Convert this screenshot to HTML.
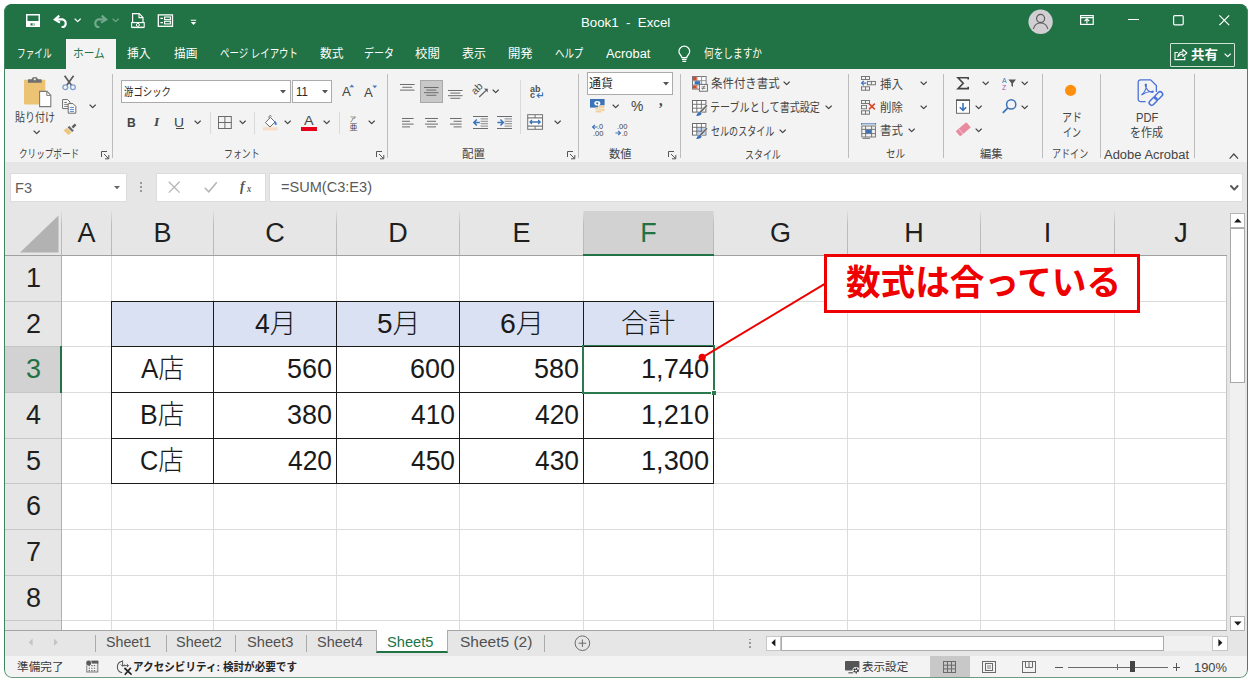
<!DOCTYPE html>
<html lang="ja"><head><meta charset="utf-8"><title>Book1 - Excel</title><style>
html,body{margin:0;padding:0;background:#fff;}
body{width:1252px;height:682px;overflow:hidden;position:relative;}
#win{position:absolute;left:4px;top:4px;width:1244px;height:674px;border-radius:8px 8px 8px 8px;overflow:hidden;background:#f3f3f3;}
#o{position:absolute;left:-4px;top:-4px;width:1252px;height:682px;}
#o div,#o svg,#o span{position:absolute;box-sizing:border-box;}
#o span{line-height:1;white-space:pre;transform-origin:0 0;font-family:'Liberation Sans','Noto Sans CJK JP',sans-serif;font-weight:400;}
#o svg{overflow:visible;}
</style></head><body><div id="win"><div id="o">
<div style="left:4px;top:4px;width:1244px;height:65px;background:#217346"></div>
<div style="left:66px;top:39px;width:50px;height:31px;background:#f3f3f3"></div>
<svg style="left:26px;top:14px;" width="14" height="13" viewBox="0 0 14 13"><rect x="0.75" y="0.75" width="12.5" height="11.5" fill="none" stroke="#ffffff" stroke-width="1.5"/><rect x="1" y="7" width="12" height="5" fill="#ffffff"/><rect x="4.5" y="9.3" width="4" height="2.2" fill="#217346"/><rect x="6.6" y="9.3" width="1.2" height="2.2" fill="#ffffff"/></svg>
<svg style="left:53px;top:14px;" width="17" height="14" viewBox="0 0 17 14"><path d="M6.3 1.6 L1.8 5.6 L7 8.6" fill="none" stroke="#ffffff" stroke-width="2.1" stroke-linejoin="miter"/><path d="M2.5 5.4 H10 A4.2 4.2 0 0 1 10.6 13 H8.6" fill="none" stroke="#ffffff" stroke-width="2.1"/></svg>
<svg style="left:74.3px;top:17.65px;" width="7.4" height="4.7" viewBox="0 0 7.4 4.7"><path d="M1 1 L3.7 3.7 L6.4 1" fill="none" stroke="#ffffff" stroke-width="1.15" stroke-linecap="round" stroke-linejoin="round" opacity="1"/></svg>
<svg style="left:91px;top:14px;" width="17" height="14" viewBox="0 0 17 14"><g opacity="0.38"><path d="M10.7 1.6 L15.2 5.6 L10 8.6" fill="none" stroke="#ffffff" stroke-width="2.1"/><path d="M14.5 5.4 H7 A4.2 4.2 0 0 0 6.4 13 H8.4" fill="none" stroke="#ffffff" stroke-width="2.1"/></g></svg>
<svg style="left:112.3px;top:17.65px;" width="7.4" height="4.7" viewBox="0 0 7.4 4.7"><path d="M1 1 L3.7 3.7 L6.4 1" fill="none" stroke="#ffffff" stroke-width="1.15" stroke-linecap="round" stroke-linejoin="round" opacity="0.38"/></svg>
<svg style="left:131px;top:13px;" width="14" height="15" viewBox="0 0 14 15"><path d="M1.6 11 V0.6 H8.2 L12 4.4 V11" fill="none" stroke="#ffffff" stroke-width="1.2"/><path d="M8 0.8 V4.6 H12" fill="none" stroke="#ffffff" stroke-width="1.1"/><rect x="0.6" y="9.6" width="12.6" height="4.6" fill="#217346" stroke="#ffffff" stroke-width="1.1"/><circle cx="6.9" cy="11.9" r="1.5" fill="none" stroke="#ffffff" stroke-width="1"/><path d="M1 14.6 H13" stroke="#ffffff" stroke-width="1"/></svg>
<svg style="left:157px;top:14px;" width="17" height="13" viewBox="0 0 17 13"><rect x="1.3" y="0.9" width="14.2" height="11.4" fill="none" stroke="#ffffff" stroke-width="1.3"/><path d="M3.4 4.3 H6 M3.4 8.6 H6" stroke="#ffffff" stroke-width="1.2"/><rect x="7.6" y="3" width="5.8" height="2.6" fill="none" stroke="#ffffff" stroke-width="1.1"/><rect x="7.6" y="7.3" width="5.8" height="2.6" fill="none" stroke="#ffffff" stroke-width="1.1"/></svg>
<svg style="left:190px;top:19px;" width="7" height="7" viewBox="0 0 7 7"><path d="M0.8 1.2 H6.2" stroke="#ffffff" stroke-width="1.1"/><path d="M0.8 3 H6.2 L3.5 6 Z" fill="#ffffff"/></svg>
<svg style="left:1028px;top:9px;" width="26" height="26" viewBox="0 0 26 26"><circle cx="12.6" cy="12.8" r="12.2" fill="#d2cfd2"/><circle cx="12.6" cy="9.4" r="4" fill="none" stroke="#5a5a5a" stroke-width="1.2"/><path d="M5.4 20 A7.3 7.3 0 0 1 19.8 20" fill="none" stroke="#5a5a5a" stroke-width="1.2"/></svg>
<svg style="left:1080px;top:15px;" width="14" height="10" viewBox="0 0 14 10"><rect x="0.6" y="0.6" width="12.6" height="8.8" fill="none" stroke="#ffffff" stroke-width="1.2"/><path d="M0.6 2.6 H13.2" stroke="#ffffff" stroke-width="1.1"/><path d="M6.9 8.4 V4 M4.5 6.2 L6.9 3.8 L9.3 6.2" fill="none" stroke="#ffffff" stroke-width="1.2"/></svg>
<div style="left:1128px;top:18.5px;width:10.5px;height:1.2px;background:#ffffff"></div>
<svg style="left:1173px;top:15px;" width="11" height="11" viewBox="0 0 11 11"><rect x="0.6" y="0.6" width="9.6" height="9.3" rx="1.2" fill="none" stroke="#ffffff" stroke-width="1.2"/></svg>
<svg style="left:1219px;top:15px;" width="11" height="11" viewBox="0 0 11 11"><path d="M0.4 0.4 L10.2 10.2 M10.2 0.4 L0.4 10.2" stroke="#ffffff" stroke-width="1.2"/></svg>
<svg style="left:677px;top:46px;" width="15" height="18" viewBox="0 0 15 18"><path d="M4.9 11.6 C4.9 9.6 1.9 8.6 1.9 5.6 A5.4 5.4 0 0 1 12.7 5.6 C12.7 8.6 9.7 9.6 9.7 11.6 Z" fill="none" stroke="#ffffff" stroke-width="1.2"/><path d="M5 13.4 H9.6 M5.4 15.3 H9.2" stroke="#ffffff" stroke-width="1.2"/></svg>
<div style="left:1170px;top:43px;width:65px;height:23.5px;border:1px solid #cfe3d7;border-radius:1px"></div>
<svg style="left:1174px;top:47px;" width="14" height="14" viewBox="0 0 14 14"><path d="M4 5.5 H1 V12.6 H10.8 V9.8" fill="none" stroke="#ffffff" stroke-width="1.1"/><path d="M3.8 9.8 C4.3 6.6 6.4 5 8.9 4.8 V2.4 L12.9 6 L8.9 9.4 V7 C6.8 7 5.2 7.8 3.8 9.8 Z" fill="none" stroke="#ffffff" stroke-width="1.1" stroke-linejoin="round"/></svg>
<svg style="left:1224.3px;top:52.65px;" width="7.4" height="4.7" viewBox="0 0 7.4 4.7"><path d="M1 1 L3.7 3.7 L6.4 1" fill="none" stroke="#ffffff" stroke-width="1.15" stroke-linecap="round" stroke-linejoin="round" opacity="1"/></svg>
<div style="left:4px;top:69px;width:1244px;height:93px;background:#f3f3f3"></div>
<svg style="left:24px;top:76px;" width="28" height="32" viewBox="0 0 28 32"><rect x="0" y="3.8" width="21.3" height="24.6" rx="0.8" fill="#ebc373"/><path d="M3.9 6.8 V4 Q3.9 3.2 4.7 3.2 H7.6 Q8 1 10.8 1 Q13.6 1 14 3.2 H16.9 Q17.7 3.2 17.7 4 V6.8 Z" fill="#707070"/><circle cx="10.8" cy="3.3" r="1.1" fill="#f3f3f3"/><path d="M15.6 15.4 H23 L26.8 19.2 V30.6 H15.6 Z" fill="#fff" stroke="#7a7a7a" stroke-width="1.1"/><path d="M22.8 15.6 V19.4 H26.6" fill="none" stroke="#7a7a7a" stroke-width="1"/></svg>
<svg style="left:33.3px;top:129.85px;" width="7.4" height="4.7" viewBox="0 0 7.4 4.7"><path d="M1 1 L3.7 3.7 L6.4 1" fill="none" stroke="#444" stroke-width="1.15" stroke-linecap="round" stroke-linejoin="round" opacity="1"/></svg>
<svg style="left:62px;top:75px;" width="15" height="16" viewBox="0 0 15 16"><path d="M2.6 0.8 L9.6 10.4 M11.6 0.8 L4.6 10.4" stroke="#5a5a5a" stroke-width="1.7" fill="none"/><circle cx="3.3" cy="12.2" r="2.4" fill="none" stroke="#7d9dce" stroke-width="1.3"/><circle cx="10.9" cy="12.2" r="2.4" fill="none" stroke="#7d9dce" stroke-width="1.3"/></svg>
<svg style="left:62px;top:99px;" width="15" height="15" viewBox="0 0 15 15"><path d="M0.6 0.6 H5.6 L8 3 V9.6 H0.6 Z" fill="#fff" stroke="#6b6b6b" stroke-width="1"/><path d="M2.2 3.4 H5 M2.2 5.4 H6.4 M2.2 7.4 H6.4" stroke="#6b6b6b" stroke-width="0.9"/><path d="M6.2 4.6 H11 L13.8 7.4 V14.2 H6.2 Z" fill="#fff" stroke="#6b6b6b" stroke-width="1"/><path d="M7.8 8.4 H12 M7.8 10.4 H12 M7.8 12.4 H12" stroke="#4a78c0" stroke-width="0.9"/></svg>
<svg style="left:88.7px;top:104.25px;" width="7.4" height="4.7" viewBox="0 0 7.4 4.7"><path d="M1 1 L3.7 3.7 L6.4 1" fill="none" stroke="#444" stroke-width="1.15" stroke-linecap="round" stroke-linejoin="round" opacity="1"/></svg>
<svg style="left:63px;top:123px;" width="14" height="13" viewBox="0 0 14 13"><path d="M8.6 3.6 L11.8 0.6 L13.4 2.2 L10.2 5.4 Z" fill="#5f5f5f"/><path d="M6.2 2.8 L10.8 7.4 L9.2 9 L4.6 4.4 Z" fill="#6b6b6b"/><path d="M4 5 L8.6 9.6 L5.4 12 L0.4 7.2 Z" fill="#ecc67d"/></svg>
<svg style="left:101px;top:150.5px;" width="9" height="9" viewBox="0 0 9 9"><path d="M0.5 6 V0.5 H6" fill="none" stroke="#555" stroke-width="1"/><path d="M3 3 L7.5 7.5 M7.8 4 V7.8 H4" fill="none" stroke="#555" stroke-width="1"/></svg>
<div style="left:112px;top:74px;width:1px;height:84px;background:#bcbcbc"></div>
<div style="left:121px;top:80px;width:170px;height:23px;background:#fff;border:1px solid #ababab"></div>
<div style="left:292px;top:80px;width:40px;height:23px;background:#fff;border:1px solid #ababab"></div>
<svg style="left:280px;top:90px;" width="7" height="4" viewBox="0 0 7 4"><path d="M0 0 H6 L3 3.4 Z" fill="#555"/></svg>
<svg style="left:322px;top:90px;" width="7" height="4" viewBox="0 0 7 4"><path d="M0 0 H6 L3 3.4 Z" fill="#555"/></svg>
<svg style="left:349px;top:84px;" width="6" height="4" viewBox="0 0 6 4"><path d="M0.4 3.2 L2.8 0.6 L5.2 3.2 Z" fill="#4a78c0"/></svg>
<svg style="left:371.5px;top:84.5px;" width="6" height="4" viewBox="0 0 6 4"><path d="M0.4 0.6 L2.8 3.2 L5.2 0.6 Z" fill="#4a78c0"/></svg>
<div style="left:175.5px;top:127.6px;width:8.6px;height:1.1px;background:#444"></div>
<svg style="left:194.3px;top:120.45px;" width="7.4" height="4.7" viewBox="0 0 7.4 4.7"><path d="M1 1 L3.7 3.7 L6.4 1" fill="none" stroke="#444" stroke-width="1.15" stroke-linecap="round" stroke-linejoin="round" opacity="1"/></svg>
<div style="left:210px;top:112px;width:1px;height:22px;background:#dadada"></div>
<svg style="left:218px;top:116px;" width="14" height="13" viewBox="0 0 14 13"><rect x="0.5" y="0.5" width="12.8" height="12" fill="none" stroke="#6b6b6b" stroke-width="1"/><path d="M6.9 0.5 V12.5 M0.5 6.5 H13.3" stroke="#6b6b6b" stroke-width="1"/></svg>
<svg style="left:239.3px;top:120.45px;" width="7.4" height="4.7" viewBox="0 0 7.4 4.7"><path d="M1 1 L3.7 3.7 L6.4 1" fill="none" stroke="#444" stroke-width="1.15" stroke-linecap="round" stroke-linejoin="round" opacity="1"/></svg>
<div style="left:254px;top:112px;width:1px;height:22px;background:#dadada"></div>
<svg style="left:263px;top:114px;" width="15" height="17" viewBox="0 0 15 17"><path d="M2.4 8.6 L7.4 3.4 L12 8 L7 13 Z" fill="#fff" stroke="#6b6b6b" stroke-width="1"/><path d="M6.2 4.4 C5.4 1.6 7.6 0.6 8.4 2.6" fill="none" stroke="#6b6b6b" stroke-width="1"/><path d="M11.6 7 C13.6 8.6 13.8 10.6 12.8 11 C11.8 10.4 12 9 11.6 7 Z" fill="#3f7bd0" stroke="#3f7bd0" stroke-width="0.8"/><rect x="0" y="13.2" width="14.6" height="3.2" fill="#f8dcc6"/></svg>
<svg style="left:284.0px;top:120.45px;" width="7.4" height="4.7" viewBox="0 0 7.4 4.7"><path d="M1 1 L3.7 3.7 L6.4 1" fill="none" stroke="#444" stroke-width="1.15" stroke-linecap="round" stroke-linejoin="round" opacity="1"/></svg>
<div style="left:301px;top:126.6px;width:16px;height:4px;background:#e8001a"></div>
<svg style="left:322.9px;top:120.45px;" width="7.4" height="4.7" viewBox="0 0 7.4 4.7"><path d="M1 1 L3.7 3.7 L6.4 1" fill="none" stroke="#444" stroke-width="1.15" stroke-linecap="round" stroke-linejoin="round" opacity="1"/></svg>
<div style="left:339px;top:112px;width:1px;height:22px;background:#dadada"></div>
<svg style="left:368.0px;top:120.45px;" width="7.4" height="4.7" viewBox="0 0 7.4 4.7"><path d="M1 1 L3.7 3.7 L6.4 1" fill="none" stroke="#444" stroke-width="1.15" stroke-linecap="round" stroke-linejoin="round" opacity="1"/></svg>
<svg style="left:376px;top:150.5px;" width="9" height="9" viewBox="0 0 9 9"><path d="M0.5 6 V0.5 H6" fill="none" stroke="#555" stroke-width="1"/><path d="M3 3 L7.5 7.5 M7.8 4 V7.8 H4" fill="none" stroke="#555" stroke-width="1"/></svg>
<div style="left:387px;top:74px;width:1px;height:84px;background:#bcbcbc"></div>
<svg style="left:400px;top:83.6px;" width="14.6" height="9.399999999999999" viewBox="0 0 14.6 9.399999999999999"><path d="M0.0 0.5 H14.6" stroke="#6b6b6b" stroke-width="1"/><path d="M2.3 3.3 H12.3" stroke="#6b6b6b" stroke-width="1"/><path d="M0.0 6.1 H14.6" stroke="#6b6b6b" stroke-width="1"/></svg>
<div style="left:420px;top:80px;width:23px;height:23px;background:#c8c8c8;border:1px solid #a8a8a8"></div>
<svg style="left:424.4px;top:86.8px;" width="14.6" height="11.4" viewBox="0 0 14.6 11.4"><path d="M0.0 0.5 H14.6" stroke="#6b6b6b" stroke-width="1"/><path d="M2.3 3.1 H12.3" stroke="#6b6b6b" stroke-width="1"/><path d="M0.0 5.7 H14.6" stroke="#6b6b6b" stroke-width="1"/><path d="M2.3 8.3 H12.3" stroke="#6b6b6b" stroke-width="1"/></svg>
<svg style="left:448px;top:90px;" width="14.6" height="11.4" viewBox="0 0 14.6 11.4"><path d="M0.0 0.5 H14.6" stroke="#6b6b6b" stroke-width="1"/><path d="M2.3 3.1 H12.3" stroke="#6b6b6b" stroke-width="1"/><path d="M0.0 5.7 H14.6" stroke="#6b6b6b" stroke-width="1"/><path d="M2.3 8.3 H12.3" stroke="#6b6b6b" stroke-width="1"/></svg>
<svg style="left:472px;top:83px;" width="17" height="15" viewBox="0 0 17 15"><path d="M7.2 14 L15.2 6.4" stroke="#5f5f5f" stroke-width="1.2"/><path d="M12 5.6 L15.8 5.8 L15.6 9.6 Z" fill="#5f5f5f"/><text transform="translate(3.2 12.2) rotate(-45)" font-family="Liberation Sans,sans-serif" font-size="10.5" fill="#505050">ab</text></svg>
<svg style="left:492.3px;top:89.15px;" width="7.4" height="4.7" viewBox="0 0 7.4 4.7"><path d="M1 1 L3.7 3.7 L6.4 1" fill="none" stroke="#444" stroke-width="1.15" stroke-linecap="round" stroke-linejoin="round" opacity="1"/></svg>
<div style="left:519.5px;top:80px;width:1px;height:54px;background:#dadada"></div>
<svg style="left:401.5px;top:118px;" width="11.6" height="12.2" viewBox="0 0 11.6 12.2"><path d="M0 0.5 H11.6" stroke="#6b6b6b" stroke-width="1"/><path d="M0 3.3 H8" stroke="#6b6b6b" stroke-width="1"/><path d="M0 6.1 H11.6" stroke="#6b6b6b" stroke-width="1"/><path d="M0 8.899999999999999 H8" stroke="#6b6b6b" stroke-width="1"/></svg>
<svg style="left:424.7px;top:118px;" width="13" height="12.2" viewBox="0 0 13 12.2"><path d="M0.0 0.5 H13.0" stroke="#6b6b6b" stroke-width="1"/><path d="M2.0 3.3 H11.0" stroke="#6b6b6b" stroke-width="1"/><path d="M0.0 6.1 H13.0" stroke="#6b6b6b" stroke-width="1"/><path d="M2.0 8.899999999999999 H11.0" stroke="#6b6b6b" stroke-width="1"/></svg>
<svg style="left:449.7px;top:118px;" width="11.6" height="12.2" viewBox="0 0 11.6 12.2"><path d="M0.0 0.5 H11.6" stroke="#6b6b6b" stroke-width="1"/><path d="M3.5999999999999996 3.3 H11.6" stroke="#6b6b6b" stroke-width="1"/><path d="M0.0 6.1 H11.6" stroke="#6b6b6b" stroke-width="1"/><path d="M3.5999999999999996 8.899999999999999 H11.6" stroke="#6b6b6b" stroke-width="1"/></svg>
<svg style="left:472.8px;top:115.8px;" width="16" height="13" viewBox="0 0 16 13"><path d="M0 0.5 H15 M0 12.5 H15" stroke="#6b6b6b" stroke-width="1"/><path d="M7.6 2.9 H15 M7.6 5.3 H15 M7.6 7.7 H15 M7.6 10.1 H15" stroke="#8a8a8a" stroke-width="1"/><path d="M0.8 6.5 H6.8 M3.8 3.4 L0.8 6.5 L3.8 9.6" fill="none" stroke="#3b73b9" stroke-width="1.5"/></svg>
<svg style="left:497px;top:115.8px;" width="16" height="13" viewBox="0 0 16 13"><path d="M0 0.5 H15 M0 12.5 H15" stroke="#6b6b6b" stroke-width="1"/><path d="M7.6 2.9 H15 M7.6 5.3 H15 M7.6 7.7 H15 M7.6 10.1 H15" stroke="#8a8a8a" stroke-width="1"/><path d="M0.4 6.5 H6.4 M3.4 3.4 L6.4 6.5 L3.4 9.6" fill="none" stroke="#3b73b9" stroke-width="1.5"/></svg>
<svg style="left:535.5px;top:91.5px;" width="8" height="7" viewBox="0 0 8 7"><path d="M6.6 0.4 V3.6 H1.2 M3.4 1.4 L1.2 3.6 L3.4 5.8" fill="none" stroke="#3b73b9" stroke-width="1.1"/></svg>
<svg style="left:527px;top:114px;" width="16" height="16" viewBox="0 0 16 16"><rect x="0.7" y="0.7" width="14.8" height="14.6" fill="#fff" stroke="#7a7a7a" stroke-width="1.1"/><path d="M0.7 3.9 H15.5 M0.7 12.1 H15.5 M8.1 0.7 V3.9 M8.1 12.1 V15.3" stroke="#7a7a7a" stroke-width="1.1"/><path d="M3 8 H13.2 M5 6 L3 8 L5 10 M11.2 6 L13.2 8 L11.2 10" fill="none" stroke="#3b73b9" stroke-width="1.3"/></svg>
<svg style="left:554.3px;top:120.45px;" width="7.4" height="4.7" viewBox="0 0 7.4 4.7"><path d="M1 1 L3.7 3.7 L6.4 1" fill="none" stroke="#444" stroke-width="1.15" stroke-linecap="round" stroke-linejoin="round" opacity="1"/></svg>
<svg style="left:567px;top:150.5px;" width="9" height="9" viewBox="0 0 9 9"><path d="M0.5 6 V0.5 H6" fill="none" stroke="#555" stroke-width="1"/><path d="M3 3 L7.5 7.5 M7.8 4 V7.8 H4" fill="none" stroke="#555" stroke-width="1"/></svg>
<div style="left:578px;top:74px;width:1px;height:84px;background:#bcbcbc"></div>
<div style="left:587px;top:72px;width:86px;height:22.5px;background:#fff;border:1px solid #ababab"></div>
<svg style="left:662.5px;top:82px;" width="7" height="4" viewBox="0 0 7 4"><path d="M0 0 H6 L3 3.4 Z" fill="#555"/></svg>
<svg style="left:590px;top:99px;" width="16" height="16" viewBox="0 0 16 16"><rect x="0" y="0" width="14.6" height="8.6" fill="#3b73b9"/><ellipse cx="7.3" cy="4.3" rx="3" ry="2.3" fill="#fff"/><circle cx="7.3" cy="4.3" r="1.1" fill="#3b73b9"/><rect x="5.4" y="8.2" width="5" height="2.4" fill="#f0cf96"/><rect x="8.4" y="6.4" width="6.4" height="2.6" fill="#f0cf96" stroke="#f3f3f3" stroke-width="0.5"/><rect x="8.4" y="9.6" width="6.4" height="2.6" fill="#f0cf96" stroke="#f3f3f3" stroke-width="0.5"/><rect x="5.4" y="11.2" width="6.4" height="2.6" fill="#f0cf96" stroke="#f3f3f3" stroke-width="0.5"/></svg>
<svg style="left:612.3px;top:104.25px;" width="7.4" height="4.7" viewBox="0 0 7.4 4.7"><path d="M1 1 L3.7 3.7 L6.4 1" fill="none" stroke="#444" stroke-width="1.15" stroke-linecap="round" stroke-linejoin="round" opacity="1"/></svg>
<svg style="left:592px;top:123.6px;" width="6" height="6" viewBox="0 0 6 6"><path d="M0.6 3 H5.6 M2.8 0.8 L0.6 3 L2.8 5.2" fill="none" stroke="#3b73b9" stroke-width="1.2"/></svg>
<svg style="left:615.4px;top:130.2px;" width="6" height="6" viewBox="0 0 6 6"><path d="M0.4 3 H5.4 M3.2 0.8 L5.4 3 L3.2 5.2" fill="none" stroke="#3b73b9" stroke-width="1.2"/></svg>
<svg style="left:668px;top:150.5px;" width="9" height="9" viewBox="0 0 9 9"><path d="M0.5 6 V0.5 H6" fill="none" stroke="#555" stroke-width="1"/><path d="M3 3 L7.5 7.5 M7.8 4 V7.8 H4" fill="none" stroke="#555" stroke-width="1"/></svg>
<div style="left:679.6px;top:74px;width:1px;height:84px;background:#bcbcbc"></div>
<svg style="left:692px;top:76px;" width="16" height="16" viewBox="0 0 16 16"><rect x="0.5" y="0.5" width="13.6" height="12.6" fill="#fff" stroke="#7a7a7a" stroke-width="1"/><path d="M0.5 4.7 H14 M0.5 8.9 H14 M5 0.5 V13 M9.6 0.5 V13" stroke="#8a8a8a" stroke-width="0.9"/><rect x="1" y="1" width="3.6" height="3.3" fill="#d9482b"/><rect x="2.6" y="5.2" width="5.6" height="3.2" fill="#3b73b9"/><rect x="1" y="9.4" width="3.6" height="3.2" fill="#d9482b"/><rect x="7.4" y="8.4" width="8" height="6.8" fill="#fff" stroke="#6b6b6b" stroke-width="1"/><path d="M9.4 12.4 H13.4 M9.4 10.8 H13.4 M10.4 13.8 L12.6 9.6" stroke="#6b6b6b" stroke-width="0.8"/></svg>
<svg style="left:783.3px;top:81.45px;" width="7.4" height="4.7" viewBox="0 0 7.4 4.7"><path d="M1 1 L3.7 3.7 L6.4 1" fill="none" stroke="#444" stroke-width="1.15" stroke-linecap="round" stroke-linejoin="round" opacity="1"/></svg>
<svg style="left:692px;top:99.6px;" width="17" height="17" viewBox="0 0 17 17"><rect x="0.5" y="0.5" width="13.4" height="11.6" fill="#fff" stroke="#6b6b6b" stroke-width="1"/><path d="M0.5 4.3 H14 M0.5 8.2 H14 M4.8 0.5 V12 M9.4 0.5 V12" stroke="#6b6b6b" stroke-width="0.9"/><path d="M7.4 11.6 L14.2 4.4 L15.8 5.8 L9 13.2 Z" fill="#6b6b6b" stroke="#f3f3f3" stroke-width="0.6"/><path d="M4.2 16 C5.4 13 7 11.6 8.6 12.2 L9.6 13.6 C9.4 15.4 7 16.2 4.2 16 Z" fill="#3b73b9"/></svg>
<svg style="left:825.3px;top:105.25px;" width="7.4" height="4.7" viewBox="0 0 7.4 4.7"><path d="M1 1 L3.7 3.7 L6.4 1" fill="none" stroke="#444" stroke-width="1.15" stroke-linecap="round" stroke-linejoin="round" opacity="1"/></svg>
<svg style="left:692px;top:122.6px;" width="17" height="17" viewBox="0 0 17 17"><rect x="0.5" y="0.5" width="13.4" height="11.6" fill="#fff" stroke="#6b6b6b" stroke-width="1"/><rect x="4.6" y="4.4" width="8.6" height="7.6" fill="#bfd2ee"/><path d="M0.5 4.3 H14 M0.5 8.2 H14 M4.8 0.5 V12 M9.4 0.5 V12" stroke="#6b6b6b" stroke-width="0.9"/><path d="M7.4 11.6 L14.2 4.4 L15.8 5.8 L9 13.2 Z" fill="#6b6b6b" stroke="#f3f3f3" stroke-width="0.6"/><path d="M4.2 16 C5.4 13 7 11.6 8.6 12.2 L9.6 13.6 C9.4 15.4 7 16.2 4.2 16 Z" fill="#3b73b9"/></svg>
<svg style="left:778.7px;top:128.65px;" width="7.4" height="4.7" viewBox="0 0 7.4 4.7"><path d="M1 1 L3.7 3.7 L6.4 1" fill="none" stroke="#444" stroke-width="1.15" stroke-linecap="round" stroke-linejoin="round" opacity="1"/></svg>
<div style="left:848px;top:74px;width:1px;height:84px;background:#bcbcbc"></div>
<svg style="left:861px;top:76px;" width="15" height="15" viewBox="0 0 15 15"><g fill="none" stroke="#6b6b6b" stroke-width="0.9"><rect x="0.5" y="0.5" width="8" height="3"/><rect x="6.4" y="5.4" width="8" height="3.4"/><rect x="0.5" y="10.8" width="8" height="3.4"/><path d="M4.5 0.5 V3.5 M10.4 5.4 V8.8 M4.5 10.8 V14.2"/></g><path d="M0.6 7.1 H5.4 M2.8 4.9 L0.6 7.1 L2.8 9.3" fill="none" stroke="#3b73b9" stroke-width="1.2"/></svg>
<svg style="left:919.6px;top:81.45px;" width="7.4" height="4.7" viewBox="0 0 7.4 4.7"><path d="M1 1 L3.7 3.7 L6.4 1" fill="none" stroke="#444" stroke-width="1.15" stroke-linecap="round" stroke-linejoin="round" opacity="1"/></svg>
<svg style="left:861px;top:99.6px;" width="16" height="15" viewBox="0 0 16 15"><g fill="none" stroke="#6b6b6b" stroke-width="0.9"><rect x="0.5" y="0.5" width="8" height="3"/><rect x="0.5" y="5.4" width="5" height="3.4"/><rect x="0.5" y="10.8" width="8" height="3.4"/><path d="M4.5 0.5 V3.5 M4.5 10.8 V14.2"/></g><path d="M8 3.6 L13.8 9.4 M13.8 3.6 L8 9.4" stroke="#d9482b" stroke-width="1.5"/></svg>
<svg style="left:919.6px;top:104.95px;" width="7.4" height="4.7" viewBox="0 0 7.4 4.7"><path d="M1 1 L3.7 3.7 L6.4 1" fill="none" stroke="#444" stroke-width="1.15" stroke-linecap="round" stroke-linejoin="round" opacity="1"/></svg>
<svg style="left:861px;top:122.6px;" width="16" height="16" viewBox="0 0 16 16"><g fill="none" stroke="#6b6b6b" stroke-width="0.9"><rect x="0.8" y="3" width="13.6" height="11"/><path d="M0.8 6.4 H14.4 M0.8 10.6 H14.4 M4.6 3 V14 M10.6 3 V14"/></g><rect x="5" y="6.8" width="5.2" height="3.4" fill="#3b73b9"/><path d="M0.6 0.8 H14.6 M0.6 0 V1.8 M14.6 0 V1.8" stroke="#3b73b9" stroke-width="0.9"/><path d="M1.6 15.4 H9" stroke="#6b6b6b" stroke-width="0.9"/></svg>
<svg style="left:907.6px;top:128.45px;" width="7.4" height="4.7" viewBox="0 0 7.4 4.7"><path d="M1 1 L3.7 3.7 L6.4 1" fill="none" stroke="#444" stroke-width="1.15" stroke-linecap="round" stroke-linejoin="round" opacity="1"/></svg>
<div style="left:943px;top:74px;width:1px;height:84px;background:#bcbcbc"></div>
<svg style="left:956.8px;top:77px;" width="13" height="13" viewBox="0 0 13 13"><path d="M11.2 2.6 V0.8 H1 L6.2 6.2 L1 11.6 H11.2 V9.8" fill="none" stroke="#444" stroke-width="1.6" stroke-linejoin="miter"/></svg>
<svg style="left:981.9px;top:81.25px;" width="7.4" height="4.7" viewBox="0 0 7.4 4.7"><path d="M1 1 L3.7 3.7 L6.4 1" fill="none" stroke="#444" stroke-width="1.15" stroke-linecap="round" stroke-linejoin="round" opacity="1"/></svg>
<svg style="left:1008px;top:79px;" width="9" height="9" viewBox="0 0 9 9"><path d="M0.4 0.6 H8 L5 4.2 V8 L3.4 6.8 V4.2 Z" fill="#555"/></svg>
<svg style="left:1021.0px;top:81.25px;" width="7.4" height="4.7" viewBox="0 0 7.4 4.7"><path d="M1 1 L3.7 3.7 L6.4 1" fill="none" stroke="#444" stroke-width="1.15" stroke-linecap="round" stroke-linejoin="round" opacity="1"/></svg>
<svg style="left:956px;top:99px;" width="14" height="15" viewBox="0 0 14 15"><rect x="0.5" y="1.5" width="13" height="12.8" fill="#fff" stroke="#6b6b6b" stroke-width="1"/><path d="M0 1 H14" stroke="#555" stroke-width="1.6"/><path d="M7 4 V11.4 M3.8 8.2 L7 11.4 L10.2 8.2" fill="none" stroke="#3b73b9" stroke-width="1.6"/></svg>
<svg style="left:974.7px;top:104.55px;" width="7.4" height="4.7" viewBox="0 0 7.4 4.7"><path d="M1 1 L3.7 3.7 L6.4 1" fill="none" stroke="#444" stroke-width="1.15" stroke-linecap="round" stroke-linejoin="round" opacity="1"/></svg>
<svg style="left:1002px;top:99px;" width="15" height="15" viewBox="0 0 15 15"><circle cx="9.2" cy="5.4" r="4.6" fill="none" stroke="#3b73b9" stroke-width="1.5"/><path d="M5.8 8.8 L0.8 13.8" stroke="#3b73b9" stroke-width="1.8"/></svg>
<svg style="left:1021.0px;top:104.55px;" width="7.4" height="4.7" viewBox="0 0 7.4 4.7"><path d="M1 1 L3.7 3.7 L6.4 1" fill="none" stroke="#444" stroke-width="1.15" stroke-linecap="round" stroke-linejoin="round" opacity="1"/></svg>
<svg style="left:956px;top:122px;" width="15" height="15" viewBox="0 0 15 15"><g transform="translate(7.3 7.3) rotate(-40)"><rect x="-7" y="-3.5" width="14" height="7" rx="1" fill="#e98aa0"/><path d="M-3.2 -3.5 V3.5" stroke="#f6c9d3" stroke-width="0.9"/></g></svg>
<svg style="left:974.7px;top:127.65px;" width="7.4" height="4.7" viewBox="0 0 7.4 4.7"><path d="M1 1 L3.7 3.7 L6.4 1" fill="none" stroke="#444" stroke-width="1.15" stroke-linecap="round" stroke-linejoin="round" opacity="1"/></svg>
<div style="left:1042.2px;top:74px;width:1px;height:84px;background:#bcbcbc"></div>
<svg style="left:1064px;top:84px;" width="13" height="13" viewBox="0 0 13 13"><circle cx="6.6" cy="6.4" r="5.6" fill="#ff8f0f"/></svg>
<div style="left:1100.1px;top:74px;width:1px;height:84px;background:#bcbcbc"></div>
<svg style="left:1137px;top:79px;" width="27" height="28" viewBox="0 0 27 28"><path d="M8.6 22.6 H3.6 A2.4 2.4 0 0 1 1.2 20.2 V3.2 A2.4 2.4 0 0 1 3.6 0.8 H13.6 L19.4 6.6 V13" fill="none" stroke="#4a73d8" stroke-width="1.3"/><path d="M4.4 16 C7.6 13.6 9.8 9 9.4 5.8 C9.2 4.6 8 4.8 8.2 6.2 C8.6 9.4 11.6 13 15.4 13.4 C16.8 13.4 16.6 12 15 12.2 C11.6 12.4 7.6 13.8 4.4 16 Z" fill="none" stroke="#4a73d8" stroke-width="1.1"/><g fill="none" stroke="#4a73d8" stroke-width="1.5"><rect x="-4.6" y="-2.5" width="9.2" height="5" rx="2.5" transform="translate(16.2 22.2) rotate(-45)"/><rect x="-4.6" y="-2.5" width="9.2" height="5" rx="2.5" transform="translate(21.6 16.8) rotate(-45)"/></g></svg>
<div style="left:1193.5px;top:74px;width:1px;height:84px;background:#bcbcbc"></div>
<svg style="left:1229px;top:152.5px;" width="10" height="7" viewBox="0 0 10 7"><path d="M0.6 5.6 L4.8 1 L9 5.6" fill="none" stroke="#444" stroke-width="1.2"/></svg>
<div style="left:4px;top:162px;width:1244px;height:93.5px;background:#e6e6e6"></div>
<div style="left:9.5px;top:173px;width:117px;height:28.5px;background:#fff;border:1px solid #dcdcdc"></div>
<svg style="left:114px;top:185.6px;" width="7" height="4" viewBox="0 0 7 4"><path d="M0 0 H6 L3 3.2 Z" fill="#666"/></svg>
<div style="left:140.2px;top:182.4px;width:1.7px;height:1.7px;background:#9a9a9a"></div>
<div style="left:140.2px;top:186.2px;width:1.7px;height:1.7px;background:#9a9a9a"></div>
<div style="left:140.2px;top:190px;width:1.7px;height:1.7px;background:#9a9a9a"></div>
<div style="left:156px;top:173px;width:109.5px;height:28.5px;background:#fff;border:1px solid #dcdcdc"></div>
<svg style="left:168px;top:181px;" width="13" height="13" viewBox="0 0 13 13"><path d="M0.8 0.8 L11.6 11.6 M11.6 0.8 L0.8 11.6" stroke="#b4b4b4" stroke-width="1.3"/></svg>
<svg style="left:204px;top:181px;" width="14" height="13" viewBox="0 0 14 13"><path d="M0.8 6.8 L4.8 10.8 L12.8 1.2" fill="none" stroke="#b4b4b4" stroke-width="1.5"/></svg>
<div style="left:268.5px;top:173px;width:974px;height:28.5px;background:#fff;border:1px solid #dcdcdc"></div>
<svg style="left:1229.7px;top:184.6px;" width="8.6" height="5.6" viewBox="0 0 8.6 5.6"><path d="M1 1 L4.3 4.6 L7.6 1" fill="none" stroke="#5a5a5a" stroke-width="2" stroke-linecap="round" stroke-linejoin="round" opacity="1"/></svg>
<div style="left:5px;top:255px;width:57px;height:375px;background:#e6e6e6"></div>
<div style="left:62px;top:256px;width:1165px;height:374px;background:#fff"></div>
<div style="left:584px;top:211px;width:129px;height:44px;background:#d2d2d2"></div>
<div style="left:5px;top:347px;width:56px;height:45px;background:#d2d2d2"></div>
<div style="left:61px;top:211px;width:1px;height:45px;background:linear-gradient(#e0e0e0,#bdbdbd 30%,#b8b8b8)"></div>
<div style="left:111px;top:211px;width:1px;height:45px;background:linear-gradient(#e0e0e0,#bdbdbd 30%,#b8b8b8)"></div>
<div style="left:213px;top:211px;width:1px;height:45px;background:linear-gradient(#e0e0e0,#bdbdbd 30%,#b8b8b8)"></div>
<div style="left:336px;top:211px;width:1px;height:45px;background:linear-gradient(#e0e0e0,#bdbdbd 30%,#b8b8b8)"></div>
<div style="left:459px;top:211px;width:1px;height:45px;background:linear-gradient(#e0e0e0,#bdbdbd 30%,#b8b8b8)"></div>
<div style="left:583px;top:211px;width:1px;height:45px;background:linear-gradient(#e0e0e0,#bdbdbd 30%,#b8b8b8)"></div>
<div style="left:713px;top:211px;width:1px;height:45px;background:linear-gradient(#e0e0e0,#bdbdbd 30%,#b8b8b8)"></div>
<div style="left:847px;top:211px;width:1px;height:45px;background:linear-gradient(#e0e0e0,#bdbdbd 30%,#b8b8b8)"></div>
<div style="left:980px;top:211px;width:1px;height:45px;background:linear-gradient(#e0e0e0,#bdbdbd 30%,#b8b8b8)"></div>
<div style="left:1114px;top:211px;width:1px;height:45px;background:linear-gradient(#e0e0e0,#bdbdbd 30%,#b8b8b8)"></div>
<div style="left:5px;top:255px;width:1222px;height:1px;background:#a0a0a0"></div>
<div style="left:5px;top:301px;width:57px;height:1px;background:#c6c6c6"></div>
<div style="left:5px;top:346px;width:57px;height:1px;background:#c6c6c6"></div>
<div style="left:5px;top:392px;width:57px;height:1px;background:#c6c6c6"></div>
<div style="left:5px;top:438px;width:57px;height:1px;background:#c6c6c6"></div>
<div style="left:5px;top:483px;width:57px;height:1px;background:#c6c6c6"></div>
<div style="left:5px;top:529px;width:57px;height:1px;background:#c6c6c6"></div>
<div style="left:5px;top:575px;width:57px;height:1px;background:#c6c6c6"></div>
<div style="left:5px;top:620px;width:57px;height:1px;background:#c6c6c6"></div>
<div style="left:61px;top:255px;width:1px;height:375px;background:#b0b0b0"></div>
<svg style="left:19px;top:214px;" width="41" height="40" viewBox="0 0 41 40"><path d="M39.5 1.5 V38.5 H1 Z" fill="#b2b2b2"/></svg>
<div style="left:111px;top:256px;width:1px;height:374px;background:#dcdcdc"></div>
<div style="left:213px;top:256px;width:1px;height:374px;background:#dcdcdc"></div>
<div style="left:336px;top:256px;width:1px;height:374px;background:#dcdcdc"></div>
<div style="left:459px;top:256px;width:1px;height:374px;background:#dcdcdc"></div>
<div style="left:583px;top:256px;width:1px;height:374px;background:#dcdcdc"></div>
<div style="left:713px;top:256px;width:1px;height:374px;background:#dcdcdc"></div>
<div style="left:847px;top:256px;width:1px;height:374px;background:#dcdcdc"></div>
<div style="left:980px;top:256px;width:1px;height:374px;background:#dcdcdc"></div>
<div style="left:1114px;top:256px;width:1px;height:374px;background:#dcdcdc"></div>
<div style="left:62px;top:301px;width:1165px;height:1px;background:#dcdcdc"></div>
<div style="left:62px;top:346px;width:1165px;height:1px;background:#dcdcdc"></div>
<div style="left:62px;top:392px;width:1165px;height:1px;background:#dcdcdc"></div>
<div style="left:62px;top:438px;width:1165px;height:1px;background:#dcdcdc"></div>
<div style="left:62px;top:483px;width:1165px;height:1px;background:#dcdcdc"></div>
<div style="left:62px;top:529px;width:1165px;height:1px;background:#dcdcdc"></div>
<div style="left:62px;top:575px;width:1165px;height:1px;background:#dcdcdc"></div>
<div style="left:62px;top:620px;width:1165px;height:1px;background:#dcdcdc"></div>
<div style="left:1226px;top:256px;width:1px;height:374px;background:#c6c6c6"></div>
<div style="left:112px;top:302px;width:602px;height:45px;background:#d9e1f2"></div>
<div style="left:111px;top:301px;width:1px;height:183px;background:#1a1a1a"></div>
<div style="left:213px;top:301px;width:1px;height:183px;background:#1a1a1a"></div>
<div style="left:336px;top:301px;width:1px;height:183px;background:#1a1a1a"></div>
<div style="left:459px;top:301px;width:1px;height:183px;background:#1a1a1a"></div>
<div style="left:583px;top:301px;width:1px;height:183px;background:#1a1a1a"></div>
<div style="left:713px;top:301px;width:1px;height:183px;background:#1a1a1a"></div>
<div style="left:111px;top:301px;width:603px;height:1px;background:#1a1a1a"></div>
<div style="left:111px;top:346px;width:603px;height:1px;background:#1a1a1a"></div>
<div style="left:111px;top:392px;width:603px;height:1px;background:#1a1a1a"></div>
<div style="left:111px;top:438px;width:603px;height:1px;background:#1a1a1a"></div>
<div style="left:111px;top:483px;width:603px;height:1px;background:#1a1a1a"></div>
<div style="left:583px;top:254px;width:131px;height:2px;background:#217346"></div>
<div style="left:60px;top:346px;width:2px;height:47px;background:#217346"></div>
<div style="left:582px;top:345.4px;width:133px;height:48.4px;border:2px solid #2a7a4e;border-top-width:1.7px"></div>
<div style="left:710.8px;top:389.8px;width:5.2px;height:5.2px;background:#2a7a4e;border:1px solid #fff;border-right:0;border-bottom:0"></div>
<div style="left:4px;top:630px;width:1244px;height:26px;background:#e6e6e6"></div>
<div style="left:1227px;top:209px;width:21px;height:424px;background:#e6e6e6"></div>
<div style="left:1229.5px;top:213px;width:15.5px;height:417px;background:#f0f0f0"></div>
<div style="left:1229.5px;top:213px;width:15.5px;height:15px;background:#fff;border:1px solid #b4b4b4"></div>
<svg style="left:1233.5px;top:217.6px;" width="8" height="5" viewBox="0 0 8 5"><path d="M0 4.4 L3.8 0.4 L7.6 4.4 Z" fill="#1a1a1a"/></svg>
<div style="left:1229.5px;top:227.5px;width:15.5px;height:155.5px;background:#fff;border:1px solid #a8a8a8"></div>
<div style="left:1229.5px;top:615.5px;width:15.5px;height:15px;background:#fff;border:1px solid #b4b4b4"></div>
<svg style="left:1233.5px;top:620.8px;" width="8" height="5" viewBox="0 0 8 5"><path d="M0 0.4 L3.8 4.4 L7.6 0.4 Z" fill="#1a1a1a"/></svg>
<div style="left:4px;top:630px;width:1223px;height:1px;background:#a6a6a6"></div>
<div style="left:781px;top:636px;width:431px;height:14.5px;background:#f0f0f0"></div>
<svg style="left:28px;top:638px;" width="6" height="9" viewBox="0 0 6 9"><path d="M4.6 0.6 V8 L0.8 4.3 Z" fill="#c4c4c4"/></svg>
<svg style="left:53px;top:638px;" width="6" height="9" viewBox="0 0 6 9"><path d="M1 0.6 V8 L4.8 4.3 Z" fill="#c4c4c4"/></svg>
<div style="left:94.5px;top:635px;width:1px;height:17px;background:#ababab"></div>
<div style="left:165.5px;top:635px;width:1px;height:17px;background:#ababab"></div>
<div style="left:235px;top:635px;width:1px;height:17px;background:#ababab"></div>
<div style="left:306px;top:635px;width:1px;height:17px;background:#ababab"></div>
<div style="left:544px;top:635px;width:1px;height:17px;background:#ababab"></div>
<div style="left:376px;top:630px;width:72px;height:23px;background:#fff;border-left:1px solid #ababab;border-right:1px solid #ababab;border-bottom:2px solid #217346"></div>
<svg style="left:574px;top:635px;" width="17" height="17" viewBox="0 0 17 17"><circle cx="8.4" cy="8.2" r="7.3" fill="none" stroke="#6b6b6b" stroke-width="1"/><path d="M4.6 8.2 H12.2 M8.4 4.4 V12" stroke="#6b6b6b" stroke-width="1"/></svg>
<div style="left:749.4px;top:638.6px;width:1.7px;height:1.7px;background:#9a9a9a"></div>
<div style="left:749.4px;top:642.4px;width:1.7px;height:1.7px;background:#9a9a9a"></div>
<div style="left:749.4px;top:646.2px;width:1.7px;height:1.7px;background:#9a9a9a"></div>
<div style="left:765.5px;top:635.5px;width:15.5px;height:15px;background:#fff;border:1px solid #c6c6c6"></div>
<svg style="left:770.5px;top:639px;" width="5" height="8" viewBox="0 0 5 8"><path d="M4.4 0 V7.6 L0.4 3.8 Z" fill="#1a1a1a"/></svg>
<div style="left:780.5px;top:635.5px;width:383px;height:15px;background:#fff;border:1px solid #ababab"></div>
<div style="left:1212px;top:635.5px;width:15.5px;height:15px;background:#fff;border:1px solid #c6c6c6"></div>
<svg style="left:1217.5px;top:639px;" width="5" height="8" viewBox="0 0 5 8"><path d="M0.4 0 V7.6 L4.4 3.8 Z" fill="#1a1a1a"/></svg>
<div style="left:4px;top:656px;width:1244px;height:22px;background:#f3f3f3"></div>
<svg style="left:85.5px;top:660px;" width="13" height="13" viewBox="0 0 13 13"><rect x="0.8" y="1.2" width="11" height="10.8" fill="#f7f7f7" stroke="#7a7a7a" stroke-width="1"/><rect x="5.4" y="0.8" width="6.9" height="2.8" fill="#5a5a5a"/><circle cx="2.7" cy="3" r="2.9" fill="#f3f3f3"/><circle cx="2.7" cy="3" r="2.5" fill="#5a5a5a"/><path d="M2.6 5.6 H10.6 M2.6 8.2 H10.6 M2.6 10.6 H10.6" stroke="#6b6b6b" stroke-width="1.1" stroke-dasharray="1.4 1.2"/></svg>
<svg style="left:116px;top:660px;" width="17" height="16" viewBox="0 0 17 16"><path d="M6.2 1.2 A5.9 5.9 0 0 0 6.2 12.8" fill="none" stroke="#5a5a5a" stroke-width="1.1"/><path d="M6.6 0.4 V6.2 M4.8 4.5 L6.6 6.3 L8.4 4.5 M6.6 5.6 H12.4 M10.8 4 L12.5 5.6 L10.8 7.2" fill="none" stroke="#5a5a5a" stroke-width="1"/><path d="M8.4 8 L15.6 14.6 M14.8 7.8 L8.8 14.8" stroke="#262626" stroke-width="1.7"/></svg>
<svg style="left:844.6px;top:660.6px;" width="16" height="14" viewBox="0 0 16 14"><rect x="0" y="0" width="14.4" height="9.6" rx="0.8" fill="#555"/><path d="M3.4 11.8 H8" stroke="#555" stroke-width="1.2"/><circle cx="11" cy="9.6" r="3.6" fill="#f3f3f3"/><circle cx="11" cy="9.6" r="2.1" fill="none" stroke="#333" stroke-width="1.6" stroke-dasharray="1.1 1.1"/><circle cx="11" cy="9.6" r="1.5" fill="none" stroke="#333" stroke-width="0.9"/></svg>
<div style="left:929.5px;top:656px;width:40px;height:22px;background:#c8c8c8"></div>
<svg style="left:943px;top:660.5px;" width="13" height="12" viewBox="0 0 13 12"><rect x="0.5" y="0.5" width="12" height="11" fill="none" stroke="#6b6b6b" stroke-width="1"/><path d="M4.5 0.5 V11.5 M8.5 0.5 V11.5 M0.5 4.2 H12.5 M0.5 7.9 H12.5" stroke="#6b6b6b" stroke-width="1"/></svg>
<svg style="left:982px;top:660.5px;" width="14" height="12" viewBox="0 0 14 12"><rect x="0.5" y="0.5" width="13" height="11" fill="none" stroke="#6b6b6b" stroke-width="1"/><rect x="3.5" y="2.5" width="7" height="7" fill="none" stroke="#6b6b6b" stroke-width="1"/><path d="M5 5 H9 M5 7 H9" stroke="#6b6b6b" stroke-width="0.8"/></svg>
<svg style="left:1022px;top:660.5px;" width="14" height="12" viewBox="0 0 14 12"><rect x="0.5" y="0.5" width="13" height="11" fill="none" stroke="#6b6b6b" stroke-width="1"/><path d="M3.5 0.5 V6.5 H10.5 V0.5 M7 0.5 V6.5" fill="none" stroke="#6b6b6b" stroke-width="1"/></svg>
<div style="left:1054.6px;top:666.6px;width:8px;height:1.1px;background:#555"></div>
<div style="left:1068px;top:666.6px;width:99.5px;height:1.1px;background:#6b6b6b"></div>
<div style="left:1117.3px;top:664px;width:1.1px;height:6px;background:#6b6b6b"></div>
<div style="left:1130.4px;top:661.4px;width:4.6px;height:11px;background:#444"></div>
<div style="left:1172.6px;top:666.6px;width:7.6px;height:1.1px;background:#555"></div>
<div style="left:1175.9px;top:663.3px;width:1.1px;height:7.6px;background:#555"></div>
<div style="left:824px;top:254.1px;width:316.4px;height:58.7px;background:#fff;border:3.5px solid #ee0000"></div>
<div style="left:4px;top:4px;width:1244px;height:674px;border:1px solid #3f8560;border-top-color:#217346;border-bottom-color:#6f9a82;border-radius:8px;pointer-events:none"></div>
<span style="left:581.24px;top:17.20px;color:#ffffff;font-size:12.5px;transform:scaleX(1.0621);">Book1  -  Excel</span>
<span style="left:16.88px;top:48.40px;color:#ffffff;font-size:12px;transform:scaleX(0.7191);">ファイル</span>
<span style="left:127.40px;top:48.40px;color:#ffffff;font-size:12px;transform:scaleX(0.9750);">挿入</span>
<span style="left:174.00px;top:48.40px;color:#ffffff;font-size:12px;transform:scaleX(0.9750);">描画</span>
<span style="left:219.60px;top:48.40px;color:#ffffff;font-size:12px;transform:scaleX(0.7871);">ページ レイアウト</span>
<span style="left:319.80px;top:48.40px;color:#ffffff;font-size:12px;transform:scaleX(0.9792);">数式</span>
<span style="left:364.47px;top:48.40px;color:#ffffff;font-size:12px;transform:scaleX(0.8323);">データ</span>
<span style="left:415.20px;top:48.40px;color:#ffffff;font-size:12px;transform:scaleX(1.0348);">校閲</span>
<span style="left:461.70px;top:48.40px;color:#ffffff;font-size:12px;transform:scaleX(0.9958);">表示</span>
<span style="left:507.67px;top:48.40px;color:#ffffff;font-size:12px;transform:scaleX(1.0304);">開発</span>
<span style="left:554.70px;top:48.40px;color:#ffffff;font-size:12px;transform:scaleX(0.7861);">ヘルプ</span>
<span style="left:605.50px;top:48.40px;color:#ffffff;font-size:12px;transform:scaleX(1.0733);">Acrobat</span>
<span style="left:704.00px;top:48.40px;color:#ffffff;font-size:12px;transform:scaleX(0.8056);">何をしますか</span>
<span style="left:73.00px;top:48.40px;color:#217346;font-size:12px;transform:scaleX(0.8889);">ホーム</span>
<span style="left:1191.00px;top:47.60px;color:#ffffff;font-size:13px;font-weight:700;transform:scaleX(1.0308);">共有</span>
<span style="left:15.40px;top:112.00px;color:#444444;font-size:12px;transform:scaleX(0.8354);">貼り付け</span>
<span style="left:19.25px;top:149.20px;color:#444444;font-size:11.5px;transform:scaleX(0.7468);">クリップボード</span>
<span style="left:123.50px;top:86.60px;color:#262626;font-size:11.5px;transform:scaleX(0.8158);">游ゴシック</span>
<span style="left:295.80px;top:86.10px;color:#262626;font-size:12px;transform:scaleX(0.9544);">11</span>
<span style="left:341.70px;top:85.10px;color:#444444;font-size:13.5px;transform:scaleX(0.9778);">A</span>
<span style="left:364.00px;top:86.70px;color:#444444;font-size:12px;transform:scaleX(1.1000);">A</span>
<span style="left:127.00px;top:115.50px;color:#444444;font-size:13px;font-weight:700;transform:scaleX(0.9333);">B</span>
<span style="left:154.00px;top:115.00px;color:#444444;font-size:13.5px;font-family:'Liberation Serif','Noto Serif CJK SC',serif;font-weight:700;font-style:italic;transform:scaleX(1.0000);">I</span>
<span style="left:174.44px;top:115.50px;color:#444444;font-size:13px;transform:scaleX(1.0625);">U</span>
<span style="left:304.20px;top:113.90px;color:#444444;font-size:13.5px;transform:scaleX(1.0667);">A</span>
<span style="left:349.40px;top:115.70px;color:#444444;font-size:7.5px;font-style:italic;transform:scaleX(0.8000);">ア</span>
<span style="left:349.40px;top:123.60px;color:#444444;font-size:8px;transform:scaleX(1.0000);">亜</span>
<span style="left:224.03px;top:149.20px;color:#444444;font-size:11.5px;transform:scaleX(0.7724);">フォント</span>
<span style="left:530.00px;top:84.80px;color:#505050;font-size:9px;font-weight:700;transform:scaleX(0.9995);">ab</span>
<span style="left:530.00px;top:90.70px;color:#505050;font-size:9px;font-weight:700;transform:scaleX(1.0000);">c</span>
<span style="left:462.00px;top:149.20px;color:#444444;font-size:11.5px;transform:scaleX(1.0000);">配置</span>
<span style="left:589.00px;top:77.90px;color:#262626;font-size:12px;transform:scaleX(1.0000);">通貨</span>
<span style="left:631.00px;top:98.20px;color:#444444;font-size:15px;transform:scaleX(0.9231);">%</span>
<span style="left:659.00px;top:93.00px;color:#444444;font-size:16px;font-family:'Liberation Serif','Noto Serif CJK SC',serif;font-weight:700;transform:scaleX(0.9000);">,</span>
<span style="left:597.40px;top:122.90px;color:#444444;font-size:8px;transform:scaleX(0.9138);">.0</span>
<span style="left:593.00px;top:129.50px;color:#444444;font-size:8px;transform:scaleX(0.9424);">.00</span>
<span style="left:617.00px;top:122.90px;color:#444444;font-size:8px;transform:scaleX(0.9424);">.00</span>
<span style="left:622.00px;top:129.50px;color:#444444;font-size:8px;transform:scaleX(0.8307);">.0</span>
<span style="left:609.00px;top:149.20px;color:#444444;font-size:11.5px;transform:scaleX(0.9787);">数値</span>
<span style="left:711.00px;top:78.00px;color:#444444;font-size:12px;transform:scaleX(0.9542);">条件付き書式</span>
<span style="left:710.16px;top:102.20px;color:#444444;font-size:12px;transform:scaleX(0.8397);">テーブルとして書式設定</span>
<span style="left:711.00px;top:125.50px;color:#444444;font-size:12px;transform:scaleX(0.7548);">セルのスタイル</span>
<span style="left:745.22px;top:149.50px;color:#444444;font-size:11.5px;transform:scaleX(0.7775);">スタイル</span>
<span style="left:880.00px;top:78.80px;color:#444444;font-size:12px;transform:scaleX(0.9500);">挿入</span>
<span style="left:880.00px;top:101.80px;color:#444444;font-size:12px;transform:scaleX(0.9500);">削除</span>
<span style="left:880.00px;top:125.00px;color:#444444;font-size:12px;transform:scaleX(0.9500);">書式</span>
<span style="left:885.70px;top:149.20px;color:#444444;font-size:11.5px;transform:scaleX(0.8311);">セル</span>
<span style="left:1002.40px;top:77.10px;color:#3b73b9;font-size:7.5px;transform:scaleX(0.9200);">A</span>
<span style="left:1002.40px;top:84.10px;color:#9b59b6;font-size:7.5px;transform:scaleX(0.9200);">Z</span>
<span style="left:980.00px;top:149.20px;color:#444444;font-size:11.5px;transform:scaleX(0.9787);">編集</span>
<span style="left:1062.07px;top:112.00px;color:#444444;font-size:12px;transform:scaleX(0.8318);">アド</span>
<span style="left:1062.65px;top:127.30px;color:#444444;font-size:12px;transform:scaleX(0.7522);">イン</span>
<span style="left:1052.21px;top:149.20px;color:#444444;font-size:11.5px;transform:scaleX(0.7865);">アドイン</span>
<span style="left:1135.70px;top:112.00px;color:#444444;font-size:12px;transform:scaleX(0.9294);">PDF</span>
<span style="left:1129.68px;top:127.30px;color:#444444;font-size:12px;transform:scaleX(0.9200);">を作成</span>
<span style="left:1103.50px;top:148.70px;color:#444444;font-size:12px;transform:scaleX(1.0805);">Adobe Acrobat</span>
<span style="left:14.80px;top:181.20px;color:#5f5f5f;font-size:14.5px;transform:scaleX(1.0027);">F3</span>
<span style="left:240.00px;top:178.50px;color:#555;font-size:15px;font-family:'Liberation Serif','Noto Serif CJK SC',serif;font-weight:700;font-style:italic;transform:scaleX(0.9143);">f</span>
<span style="left:247.43px;top:184.10px;color:#555;font-size:10px;font-family:'Liberation Serif','Noto Serif CJK SC',serif;font-weight:700;font-style:italic;transform:scaleX(0.8333);">x</span>
<span style="left:281.00px;top:179.20px;color:#5a5a5a;font-size:15px;transform:scaleX(0.9704);">=SUM(C3:E3)</span>
<span style="left:77.50px;top:220.30px;color:#1f1f1f;font-size:27px;">A</span>
<span style="left:153.50px;top:220.30px;color:#1f1f1f;font-size:27px;">B</span>
<span style="left:265.25px;top:220.30px;color:#1f1f1f;font-size:27px;">C</span>
<span style="left:388.25px;top:220.30px;color:#1f1f1f;font-size:27px;">D</span>
<span style="left:512.50px;top:220.30px;color:#1f1f1f;font-size:27px;">E</span>
<span style="left:640.25px;top:220.30px;color:#217346;font-size:27px;">F</span>
<span style="left:770.00px;top:220.30px;color:#1f1f1f;font-size:27px;">G</span>
<span style="left:904.25px;top:220.30px;color:#1f1f1f;font-size:27px;">H</span>
<span style="left:1043.75px;top:220.30px;color:#1f1f1f;font-size:27px;">I</span>
<span style="left:1174.25px;top:220.30px;color:#1f1f1f;font-size:27px;">J</span>
<span style="left:25.99px;top:265.00px;color:#1f1f1f;font-size:27px;">1</span>
<span style="left:25.99px;top:310.50px;color:#1f1f1f;font-size:27px;">2</span>
<span style="left:25.99px;top:356.00px;color:#217346;font-size:27px;">3</span>
<span style="left:25.99px;top:402.00px;color:#1f1f1f;font-size:27px;">4</span>
<span style="left:25.99px;top:447.50px;color:#1f1f1f;font-size:27px;">5</span>
<span style="left:25.99px;top:493.00px;color:#1f1f1f;font-size:27px;">6</span>
<span style="left:25.99px;top:539.00px;color:#1f1f1f;font-size:27px;">7</span>
<span style="left:25.99px;top:584.50px;color:#1f1f1f;font-size:27px;">8</span>
<span style="left:254.90px;top:310.80px;color:#1a1a1a;font-size:27px;font-weight:300;transform:scaleX(0.9834);">4月</span>
<span style="left:376.86px;top:310.80px;color:#1a1a1a;font-size:27px;font-weight:300;transform:scaleX(1.0384);">5月</span>
<span style="left:499.74px;top:310.80px;color:#1a1a1a;font-size:27px;font-weight:300;transform:scaleX(1.0551);">6月</span>
<span style="left:621.20px;top:310.80px;color:#1a1a1a;font-size:27px;font-weight:300;transform:scaleX(1.0038);">合計</span>
<span style="left:140.60px;top:356.30px;color:#1a1a1a;font-size:27px;font-weight:300;transform:scaleX(0.9589);">A店</span>
<span style="left:287.40px;top:356.30px;color:#1a1a1a;font-size:27px;font-weight:300;transform:scaleX(0.9993);">560</span>
<span style="left:410.40px;top:356.30px;color:#1a1a1a;font-size:27px;font-weight:300;transform:scaleX(0.9993);">600</span>
<span style="left:534.40px;top:356.30px;color:#1a1a1a;font-size:27px;font-weight:300;transform:scaleX(0.9993);">580</span>
<span style="left:641.39px;top:356.30px;color:#1a1a1a;font-size:27px;font-weight:300;transform:scaleX(1.0070);">1,740</span>
<span style="left:139.64px;top:402.30px;color:#1a1a1a;font-size:27px;font-weight:300;transform:scaleX(0.9807);">B店</span>
<span style="left:287.40px;top:402.30px;color:#1a1a1a;font-size:27px;font-weight:300;transform:scaleX(0.9993);">380</span>
<span style="left:411.40px;top:402.30px;color:#1a1a1a;font-size:27px;font-weight:300;transform:scaleX(0.9766);">410</span>
<span style="left:535.40px;top:402.30px;color:#1a1a1a;font-size:27px;font-weight:300;transform:scaleX(0.9766);">420</span>
<span style="left:641.39px;top:402.30px;color:#1a1a1a;font-size:27px;font-weight:300;transform:scaleX(1.0070);">1,210</span>
<span style="left:140.27px;top:447.80px;color:#1a1a1a;font-size:27px;font-weight:300;transform:scaleX(0.9349);">C店</span>
<span style="left:288.40px;top:447.80px;color:#1a1a1a;font-size:27px;font-weight:300;transform:scaleX(0.9766);">420</span>
<span style="left:411.40px;top:447.80px;color:#1a1a1a;font-size:27px;font-weight:300;transform:scaleX(0.9766);">450</span>
<span style="left:535.40px;top:447.80px;color:#1a1a1a;font-size:27px;font-weight:300;transform:scaleX(0.9766);">430</span>
<span style="left:641.39px;top:447.80px;color:#1a1a1a;font-size:27px;font-weight:300;transform:scaleX(1.0070);">1,300</span>
<span style="left:106.00px;top:635.00px;color:#505050;font-size:14px;transform:scaleX(1.0160);">Sheet1</span>
<span style="left:176.40px;top:635.00px;color:#505050;font-size:14px;transform:scaleX(1.0317);">Sheet2</span>
<span style="left:246.60px;top:635.00px;color:#505050;font-size:14px;transform:scaleX(1.0452);">Sheet3</span>
<span style="left:317.40px;top:635.00px;color:#505050;font-size:14px;transform:scaleX(1.0317);">Sheet4</span>
<span style="left:459.70px;top:635.00px;color:#505050;font-size:14px;transform:scaleX(1.1065);">Sheet5 (2)</span>
<span style="left:387.40px;top:635.00px;color:#217346;font-size:14px;transform:scaleX(1.0452);">Sheet5</span>
<span style="left:16.60px;top:662.40px;color:#3a3a3a;font-size:11.5px;transform:scaleX(1.0110);">準備完了</span>
<span style="left:133.08px;top:662.40px;color:#262626;font-size:11.5px;font-weight:700;transform:scaleX(0.9201);">アクセシビリティ: 検討が必要です</span>
<span style="left:861.90px;top:662.40px;color:#3a3a3a;font-size:11.5px;transform:scaleX(1.0043);">表示設定</span>
<span style="left:1194.20px;top:661.90px;color:#444;font-size:12.5px;transform:scaleX(1.0296);">190%</span>
<span style="left:845.60px;top:264.50px;color:#ee0000;font-size:35px;font-weight:700;transform:scaleX(0.9884);">数式は合っている</span>
<svg style="left:690px;top:270px" width="150" height="100" viewBox="690 270 150 100"><path d="M702.4 357.4 L826 283.2" stroke="#ee0000" stroke-width="2"/><circle cx="702.2" cy="357.3" r="3.6" fill="#ee0000"/></svg>
</div></div></body></html>
